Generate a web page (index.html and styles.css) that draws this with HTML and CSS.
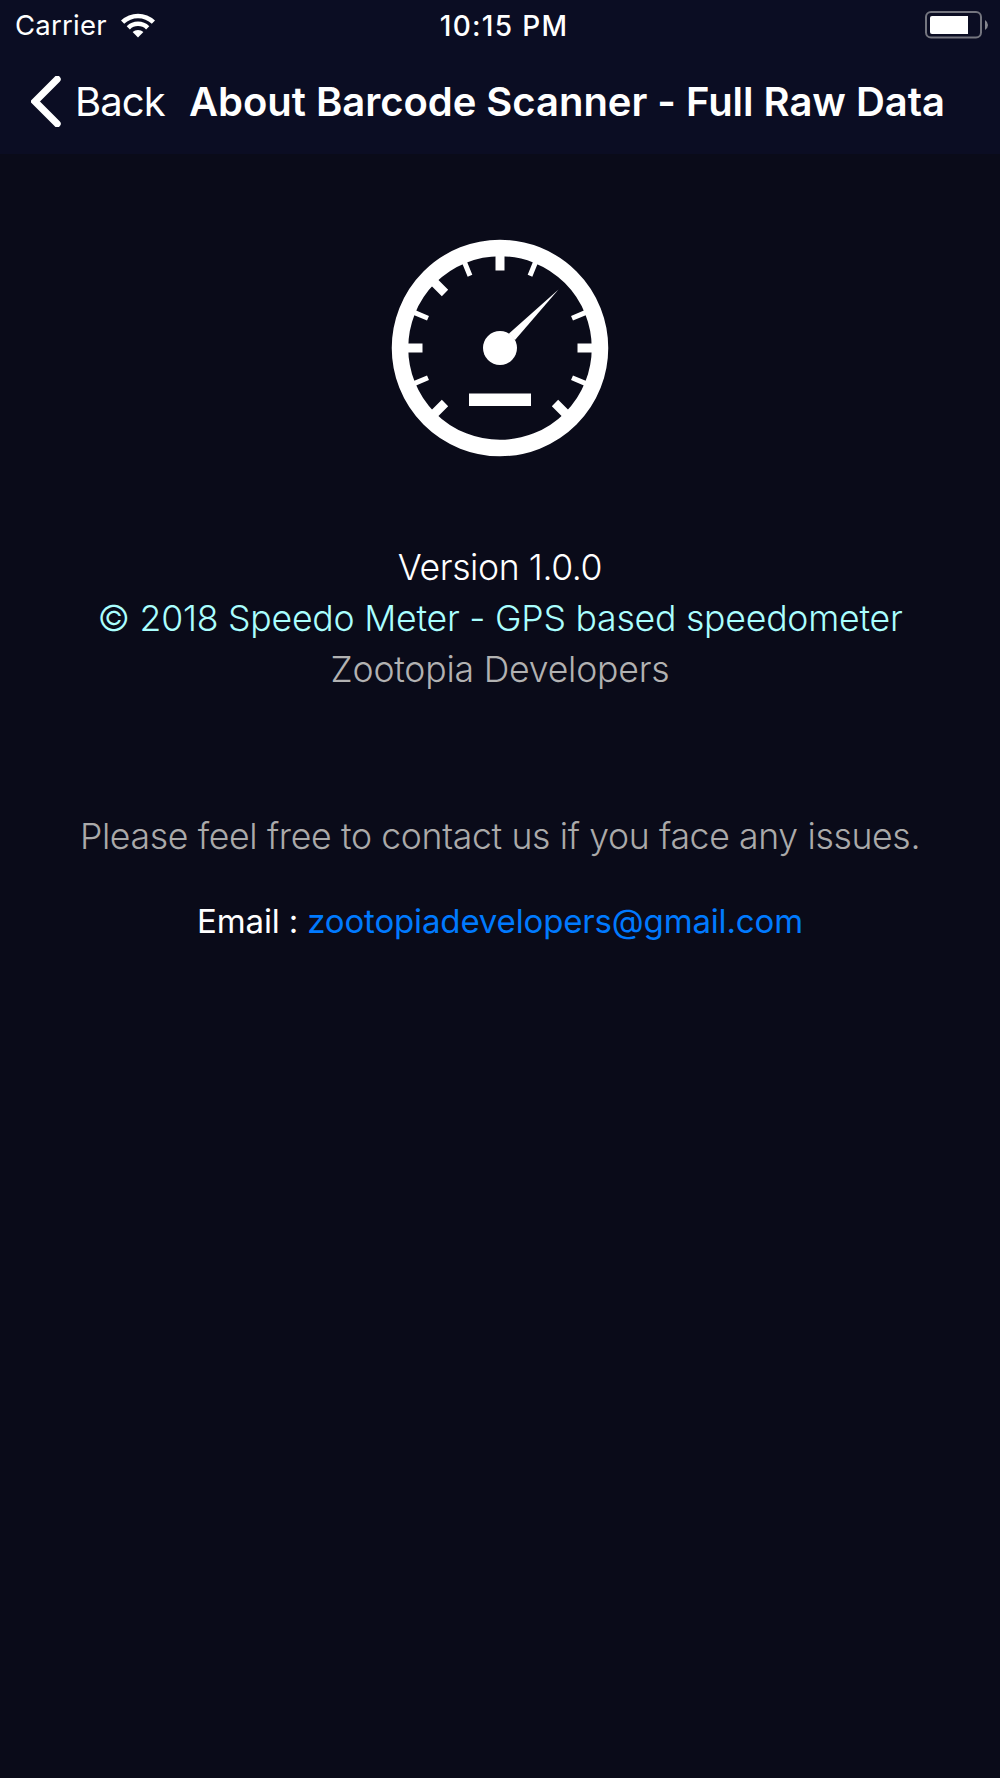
FILE: index.html
```html
<!DOCTYPE html>
<html lang="en">
<head>
<meta charset="utf-8">
<title>About</title>
<link rel="stylesheet" href="styles.css">
</head>
<body>
<header class="top">
  <div class="status">
    <div class="network">
      <span class="carrier">Carrier</span>
      <svg class="wifi" width="34" height="25" viewBox="0 0 34 25">
        <path d="M0 7.6A24.5 24.5 0 0 1 34 7.6L30.8 10.8A20 20 0 0 0 3.2 10.8Z"/>
        <path d="M5.7 13.2A16.2 16.2 0 0 1 28.3 13.2L25.1 16.4A11.6 11.6 0 0 0 8.9 16.4Z"/>
        <path d="M11.6 19A8 8 0 0 1 22.4 19L17 24.4Z"/>
      </svg>
    </div>
    <span class="time">10:15 PM</span>
    <div class="power">
      <svg class="battery" width="64" height="28" viewBox="0 0 64 28">
        <rect class="shell" x="1" y="1" width="55" height="25.5" rx="5"/>
        <path class="level" d="M7 5H43V23H7Q5 23 5 21V7Q5 5 7 5Z"/>
        <path class="tip" d="M60 9Q63 11 63 14T60 19Z"/>
      </svg>
    </div>
  </div>
  <nav class="bar">
    <a class="back"><svg class="chevron" width="30" height="51" viewBox="0 0 30 51"><path d="M26.2 3.2L4 25.5L26.2 47.8"/></svg><span class="back-label">Back</span></a>
    <h1 class="title">About Barcode Scanner - Full Raw Data</h1>
  </nav>
</header>
<main class="about">
  <svg class="gauge" width="218" height="218" viewBox="-109 -109 218 218">
    <circle class="ring" r="100"/>
    <g class="major">
      <path d="M0 -93V-77.5M-93 0H-77.5M93 0H77.5M-66 -66L-55 -55M-66 66L-55 55M66 66L55 55"/>
    </g>
    <g class="minor">
      <path d="M-35.6 -86L-30 -72.3M35.6 -86L30 -72.3M-86 -35.6L-72 -29.7M86 -35.6L72 -29.7M-86 35.6L-72 29.7M86 35.6L72 29.7"/>
    </g>
    <path class="solid" d="M9 -14.5L58.5 -58.5L15 -8Z"/>
    <circle class="solid" r="17"/>
    <rect class="solid" x="-31" y="45.5" width="62" height="12.5"/>
  </svg>
  <p class="line version">Version 1.0.0</p>
  <p class="line copyright">© 2018 Speedo Meter - GPS based speedometer</p>
  <p class="line developer">Zootopia Developers</p>
  <p class="line contact">Please feel free to contact us if you face any issues.</p>
  <p class="line email">Email : <a class="address">zootopiadevelopers@gmail.com</a></p>
</main>
</body>
</html>
```
FILE: styles.css
```css
body {
  margin: 0;
  min-height: 1778px;
  background: #0a0b19;
  color: #fff;
  font-family: Inter, "Liberation Sans", sans-serif;
}

.top {
  height: 154px;
  background: #0b0d23;
}

.status {
  display: grid;
  grid-template-columns: 1fr auto 1fr;
  align-items: center;
  height: 50px;
  padding: 0 11px 0 15px;
  font-size: 28px;
}

.network {
  display: flex;
  align-items: center;
  gap: 14px;
}

.carrier {
  font-size: 27.5px;
  font-weight: 400;
  letter-spacing: 0.25px;
}

.wifi {
  fill: #fff;
}

.time {
  padding: 1px 0 0 4px;
  font-weight: 500;
  letter-spacing: 1.3px;
}

.power {
  display: flex;
  justify-content: flex-end;
}

.shell {
  fill: none;
  stroke: #74757f;
  stroke-width: 2;
}

.level {
  fill: #fff;
}

.tip {
  fill: #85868f;
}

.bar {
  display: flex;
  align-items: center;
  height: 102px;
  padding-left: 31px;
  font-size: 40px;
}

.back {
  display: flex;
  align-items: center;
  gap: 14px;
  width: 136px;
}

.back-label {
  font-weight: 400;
  letter-spacing: -0.9px;
}

.chevron {
  flex: none;
  fill: none;
  stroke: #fff;
  stroke-width: 7;
  stroke-linecap: round;
}

.title {
  margin: 0 0 0 22px;
  font-size: 40px;
  font-weight: 600;
  letter-spacing: -0.03px;
  white-space: nowrap;
}

.about {
  display: flex;
  flex-direction: column;
  align-items: center;
  padding-top: 85px;
}

.gauge {
  fill: none;
  stroke: #fff;
  margin-bottom: 85px;
}

.ring {
  stroke-width: 16.5;
}

.major {
  stroke-width: 9;
}

.minor {
  stroke-width: 5;
}

.solid {
  fill: #fff;
  stroke: none;
}

.line {
  margin: 0;
  font-size: 35.6px;
  line-height: 51px;
  font-weight: 300;
  letter-spacing: -0.21px;
  white-space: pre;
}

.version {
  letter-spacing: -0.4px;
}

.copyright {
  color: #aff;
}

.developer {
  color: #b2b2b2;
}

.contact {
  margin-top: 116px;
  color: #aaa;
  letter-spacing: -0.34px;
}

.email {
  margin-top: 34px;
  font-size: 33px;
  font-weight: 400;
  letter-spacing: -0.15px;
}

.address {
  color: #007aff;
}
```
